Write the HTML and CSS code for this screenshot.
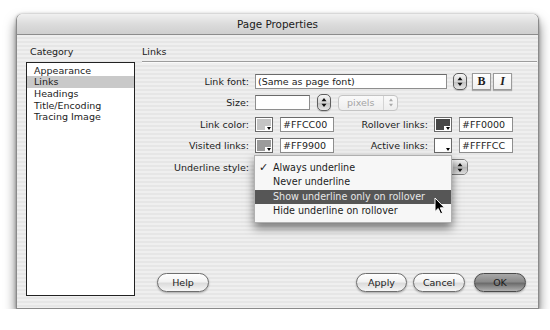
FILE: index.html
```
<!DOCTYPE html>
<html>
<head>
<meta charset="utf-8">
<title>Page Properties</title>
<link rel="stylesheet" href="styles.css">
</head>
<body>
<div class="window">
  <div class="titlebar">Page Properties</div>
  <div class="content">
    <div class="sidebar">
      <div class="cat-label">Category</div>
      <ul class="cat-list">
        <li>Appearance</li>
        <li class="sel">Links</li>
        <li>Headings</li>
        <li>Title/Encoding</li>
        <li>Tracing Image</li>
      </ul>
    </div>
    <div class="main">
      <div class="section-title">Links</div>
      <div class="form">
        <div class="row">
          <span class="label">Link font:</span>
          <span class="field w-font">(Same as page font)</span>
          <span class="stepper gap6"><svg width="6" height="11" viewBox="0 0 6 11"><path d="M3 1 L5.5 4.2 H0.5Z M3 10 L5.5 6.8 H0.5Z" fill="#111"/></svg></span>
          <span class="style-btn bold gap5">B</span>
          <span class="style-btn ital gap2">I</span>
        </div>
        <div class="row">
          <span class="label">Size:</span>
          <span class="field w-size"></span>
          <span class="stepper gap7"><svg width="6" height="11" viewBox="0 0 6 11"><path d="M3 1 L5.5 4.2 H0.5Z M3 10 L5.5 6.8 H0.5Z" fill="#111"/></svg></span>
          <span class="popup-dis gap7"><span class="pd-text">pixels</span><span class="pd-arrows"><svg width="6" height="11" viewBox="0 0 6 11"><path d="M3 1.5 L5 4.2 H1Z M3 9.5 L5 6.8 H1Z" fill="#aaa"/></svg></span></span>
        </div>
        <div class="row">
          <span class="label">Link color:</span>
          <span class="swatch"><span class="fill c-link"></span></span>
          <span class="field w-hex gap7">#FFCC00</span>
          <span class="label2">Rollover links:</span>
          <span class="swatch"><span class="fill c-roll"></span></span>
          <span class="field w-hex gap7">#FF0000</span>
        </div>
        <div class="row">
          <span class="label">Visited links:</span>
          <span class="swatch"><span class="fill c-visit"></span></span>
          <span class="field w-hex gap7">#FF9900</span>
          <span class="label2">Active links:</span>
          <span class="swatch"><span class="fill c-active"></span></span>
          <span class="field w-hex gap7">#FFFFCC</span>
        </div>
        <div class="row">
          <span class="label">Underline style:</span>
          <span class="popup">
            <span class="popup-cap"><svg width="6" height="11" viewBox="0 0 6 11"><path d="M3 1 L5.5 4.2 H0.5Z M3 10 L5.5 6.8 H0.5Z" fill="#111"/></svg></span>
            <div class="menu">
              <div class="item"><span class="check">✓</span>Always underline</div>
              <div class="item">Never underline</div>
              <div class="item hi">Show underline only on rollover</div>
              <div class="item">Hide underline on rollover</div>
              <svg class="cursor" width="12" height="18" viewBox="0 0 12 18"><path d="M1 1 L1 14.5 L4.2 11.5 L6.6 16.8 L8.6 15.9 L6.3 10.8 L10.6 10.8 Z" fill="#000" stroke="#fff" stroke-width="1"/></svg>
            </div>
          </span>
        </div>
      </div>
      <div class="buttons">
        <span class="btn help">Help</span>
        <span class="spacer"></span>
        <span class="btn">Apply</span>
        <span class="btn cancel">Cancel</span>
        <span class="btn ok">OK</span>
      </div>
    </div>
  </div>
</div>
</body>
</html>
```
FILE: styles.css
```
* { box-sizing: border-box; }
body {
  margin: 0;
  background: #ffffff;
  font-family: "DejaVu Sans", "Noto Sans", sans-serif;
  font-size: 9.5px;
  color: #1c1c1c;
}
.window {
  margin: 14px 0 0 16px;
  width: 523px;
  height: 295px;
  border: 1px solid #8a8a8a;
  border-top: none;
  border-radius: 6px 6px 0 0;
  box-shadow: 0 7px 12px rgba(0,0,0,0.55), 0 0 3px rgba(0,0,0,0.3);
  display: flex;
  flex-direction: column;
}
.titlebar {
  height: 21px;
  border-bottom: 1px solid #8c8c8c;
  border-radius: 6px 6px 0 0;
  background: linear-gradient(#f0f0f0, #dcdcdc 50%, #cfcfcf);
  text-align: center;
  font-size: 10.4px;
  line-height: 20px;
  color: #1a1a1a;
}
.content {
  flex: 1;
  display: flex;
  background: repeating-linear-gradient(to bottom, #efefef 0, #efefef 2px, #e6e6e6 2px, #e6e6e6 4px);
}
.sidebar {
  width: 125px;
  padding-left: 9px;
  display: flex;
  flex-direction: column;
}
.cat-label {
  padding: 11px 0 0 4px;
  line-height: 12px;
  height: 27px;
}
.cat-list {
  list-style: none;
  margin: 0;
  padding: 1.5px 0 0 0;
  width: 109px;
  height: 234px;
  border: 1px solid #222;
  background: #fff;
}
.cat-list li {
  height: 11.7px;
  line-height: 11.7px;
  padding-left: 7px;
}
.cat-list li.sel { background: #c9c9c9; }
.main {
  flex: 1;
  display: flex;
  flex-direction: column;
  padding-right: 1px;
}
.section-title {
  margin-top: 11px;
  line-height: 12px;
  padding-bottom: 3px;
  border-bottom: 1px solid #9c9c9c;
  box-shadow: 0 1px 0 #fafafa;
}
.form {
  margin-top: 11px;
  display: flex;
  flex-direction: column;
  gap: 5.5px;
}
.row {
  height: 16px;
  display: flex;
  align-items: center;
}
.label {
  width: 107px;
  text-align: right;
  margin-right: 6px;
  white-space: nowrap;
}
.label2 {
  width: 94px;
  text-align: right;
  margin-right: 6px;
  white-space: nowrap;
}
.field {
  height: 15px;
  line-height: 13px;
  background: #fff;
  border: 1px solid #8e8e8e;
  border-top-color: #6a6a6a;
  padding-left: 2px;
  white-space: nowrap;
  overflow: hidden;
}
.w-font { width: 192px; }
.w-size { width: 55px; }
.w-hex { width: 54px; }
.gap2 { margin-left: 2px; }
.gap5 { margin-left: 5px; }
.gap6 { margin-left: 6px; }
.gap7 { margin-left: 7px; }
.stepper {
  width: 14px;
  height: 17px;
  border: 1px solid #5e5e5e;
  border-radius: 5px;
  background: linear-gradient(#f6f6f6, #d6d6d6 50%, #c0c0c0 51%, #e6e6e6);
  display: flex;
  align-items: center;
  justify-content: center;
  box-shadow: 0 1px 1px rgba(0,0,0,0.2);
}
.style-btn {
  width: 19px;
  height: 17px;
  border: 1px solid #9a9a9a;
  background: linear-gradient(#ffffff, #f0f0f0);
  box-shadow: 0 1px 1px rgba(0,0,0,0.25);
  display: flex;
  align-items: center;
  justify-content: center;
  font-family: "Liberation Serif", serif;
  font-weight: bold;
  font-size: 12px;
  line-height: 1;
}
.style-btn.ital { font-style: italic; }
.popup-dis {
  width: 60px;
  height: 16px;
  border: 1px solid #c4c4c4;
  border-radius: 4px;
  background: linear-gradient(#fafafa, #eeeeee);
  display: flex;
  align-items: center;
  color: #a4a4a4;
}
.pd-text { flex: 1; padding-left: 8px; }
.pd-arrows {
  width: 14px;
  height: 100%;
  border-left: 1px solid #d4d4d4;
  display: flex;
  align-items: center;
  justify-content: center;
}
.swatch {
  position: relative;
  width: 18px;
  height: 15px;
  border: 1px solid #6a6a6a;
  background: #fff;
  padding: 1px;
}
.swatch .fill {
  display: block;
  width: 100%;
  height: 100%;
}
.swatch::after {
  content: "";
  position: absolute;
  right: 0;
  bottom: 0;
  width: 7px;
  height: 5px;
  background: #fff;
}
.swatch::before {
  content: "";
  position: absolute;
  right: 1px;
  bottom: 1px;
  z-index: 1;
  border-left: 2.5px solid transparent;
  border-right: 2.5px solid transparent;
  border-top: 3px solid #000;
}
.c-link { background: #c4c4c4; }
.c-visit { background: #9b9b9b; }
.c-roll { background: #474747; }
.c-active { background: #ffffff; }
.popup {
  position: relative;
  width: 213px;
  height: 16px;
  border: 1px solid #7a7a7a;
  border-radius: 5px;
  background: linear-gradient(#fdfdfd, #e2e2e2);
  display: flex;
  justify-content: flex-end;
}
.popup-cap {
  width: 14px;
  height: 100%;
  border-radius: 0 4px 4px 0;
  background: linear-gradient(#f2f2f2, #c4c4c4 50%, #b4b4b4 51%, #dedede);
  display: flex;
  align-items: center;
  justify-content: center;
}
.menu {
  position: absolute;
  left: -2px;
  top: -5px;
  width: 198px;
  padding: 4.5px 0 3px 0;
  background: #f7f7f7;
  border: 1px solid #b0b0b0;
  box-shadow: 0 5px 9px rgba(0,0,0,0.5);
  font-size: 9.6px;
}
.item {
  position: relative;
  height: 14.5px;
  line-height: 14.5px;
  padding-left: 18px;
  white-space: nowrap;
}
.item.hi {
  background: #565656;
  color: #e8e8e8;
}
.check {
  position: absolute;
  left: 4px;
  top: 0;
  font-size: 11px;
  font-weight: bold;
}
.cursor {
  position: absolute;
  left: 179px;
  top: 41px;
}
.buttons {
  margin-top: auto;
  margin-bottom: 16px;
  padding-left: 15px;
  padding-right: 11px;
  display: flex;
  align-items: center;
}
.spacer { flex: 1; }
.btn {
  width: 51px;
  height: 19px;
  border: 1px solid #6e6e6e;
  border-radius: 10px;
  background: linear-gradient(#ffffff, #f2f2f2 45%, #dcdcdc 55%, #f6f6f6);
  box-shadow: 0 1px 2px rgba(0,0,0,0.3);
  display: flex;
  align-items: center;
  justify-content: center;
  line-height: 1;
}
.help { width: 52px; }
.cancel { width: 52px; margin-left: 6px; }
.ok {
  width: 52px;
  margin-left: 9px;
  border-color: #4a4a4a;
  background: linear-gradient(#a8a8a8, #8a8a8a 45%, #6c6c6c 55%, #b0b0b0);
}
```
